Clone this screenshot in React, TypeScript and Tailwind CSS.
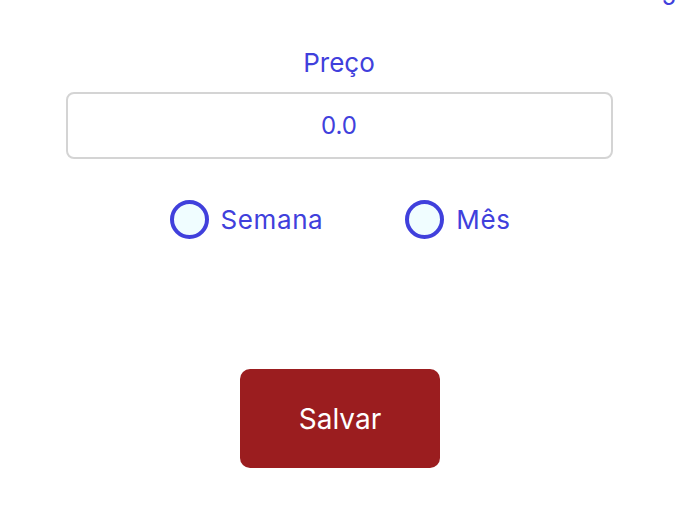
import React from "react";

export default function App() {
  return (
    <div
      className="relative w-[678px] h-[510px] bg-white overflow-hidden"
      style={{ fontFamily: "Inter, 'Noto Sans', sans-serif" }}
    >
      <span className="absolute right-[2px] top-[-15px] text-[24px] leading-none text-[#4040dc]">5</span>
      <div className="flex flex-col items-center pt-[46px]">
        <div className="text-[26px] leading-[34px] text-[#4040dc]">Preço</div>
        <div className="mt-[12px] w-[547px] h-[67px] border-2 border-[#d4d4d4] rounded-[8px] flex items-center justify-center text-[24px] text-[#4040dc]">
          0.0
        </div>
        <div className="mt-[41px] flex items-center gap-[82px] pl-[2px]">
          <div className="flex items-center gap-[12px]">
            <div className="w-[39px] h-[39px] rounded-full border-[4px] border-[#4040dc] bg-[#f0fdff]" />
            <span className="text-[26px] tracking-[0.6px] text-[#4040dc]">Semana</span>
          </div>
          <div className="flex items-center gap-[12px]">
            <div className="w-[39px] h-[39px] rounded-full border-[4px] border-[#4040dc] bg-[#f0fdff]" />
            <span className="text-[26px] tracking-[0.6px] text-[#4040dc]">Mês</span>
          </div>
        </div>
        <button className="mt-[130px] ml-[2px] w-[200px] h-[99px] rounded-[10px] bg-[#9b1d1f] text-white text-[28px]">
          Salvar
        </button>
      </div>
    </div>
  );
}
